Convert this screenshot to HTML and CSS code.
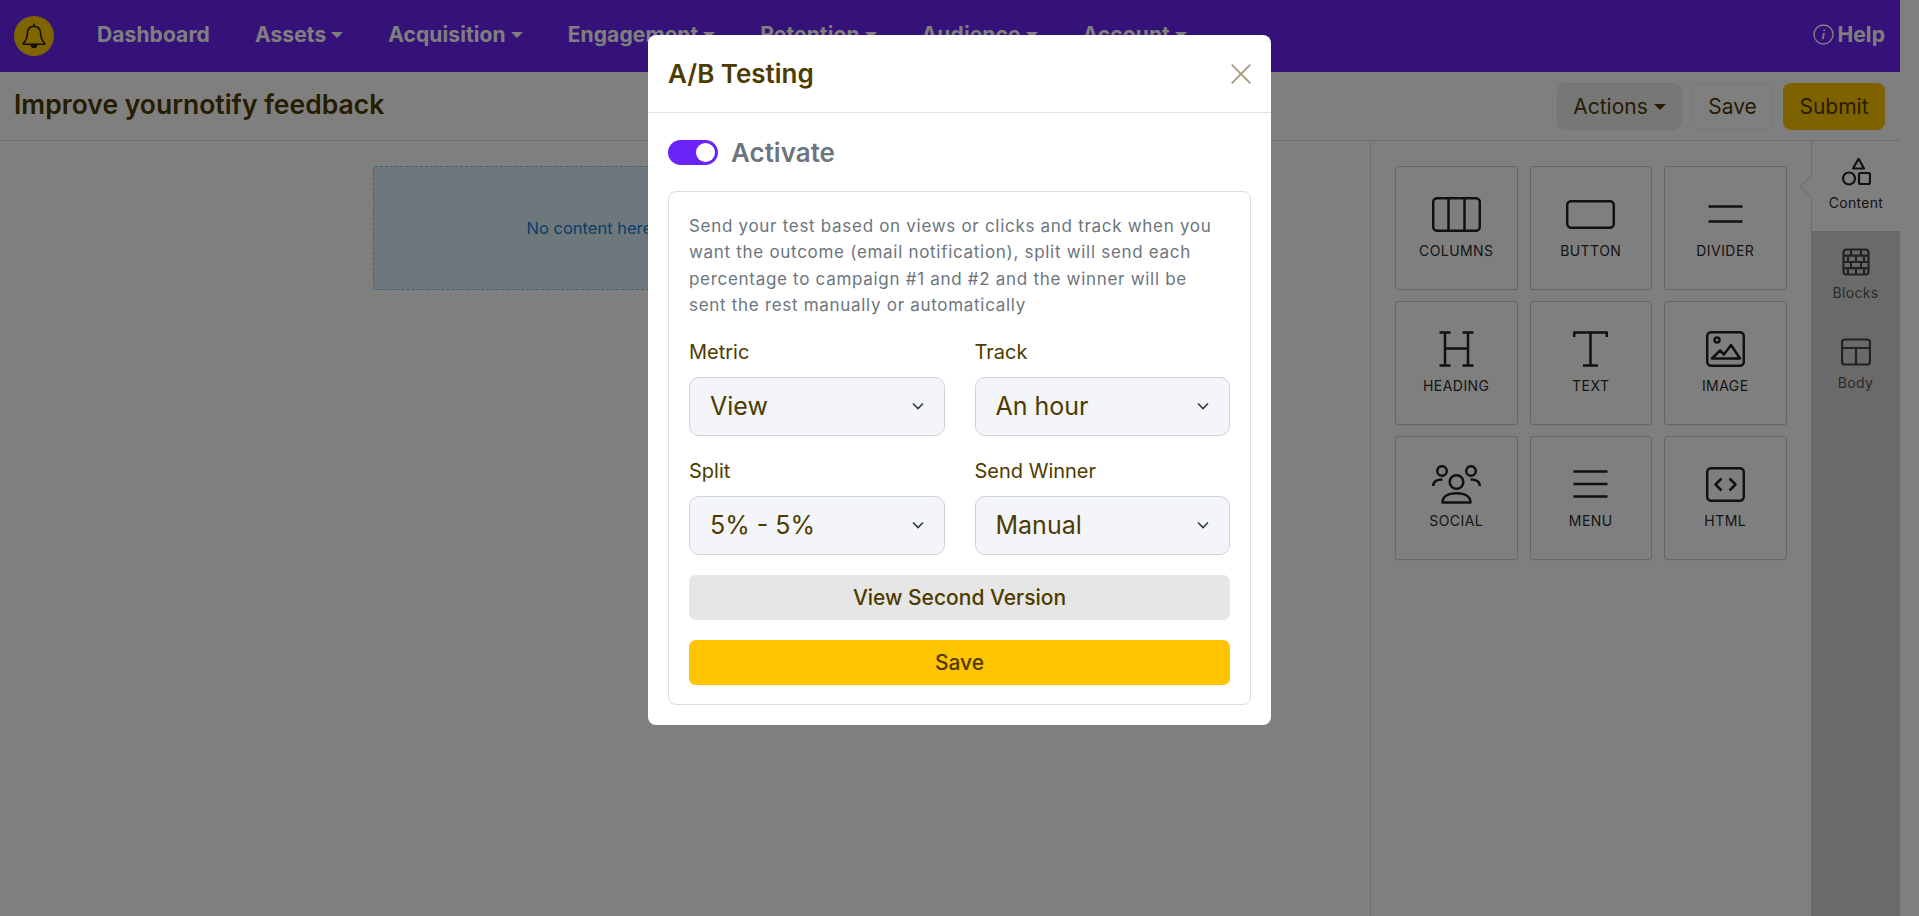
FILE: index.html
```html
<!DOCTYPE html>
<html lang="en">
<head>
    <meta charset="UTF-8">
    <title>A/B Testing</title>
    <link rel="stylesheet" href="styles.css">
</head>
<body>
    <div class="page">
        <!-- Top nav -->
        <header class="topnav">
            <div class="logo">
                <svg width="26" height="28" viewBox="0 0 26 28" fill="none" stroke="#2a1c00" stroke-width="1.6" stroke-linejoin="round">
                    <path d="M13 1.5v2.7M13 4.2c-4.4 0-6.4 3.4-6.6 7.3-.2 4.5-1.5 7.4-4 9.6-.5.5-.2 1.2.5 1.2h20.200c.7 0 1-.7.5-1.200-2.500-2.200-3.800-5.100-4-9.600-.2-3.900-2.200-7.300-6.600-7.300z"/>
                    <path d="M10 22.500c.3 2 1.500 3 3 3s2.700-1 3-3z" fill="#2a1c00"/>
                </svg>
            </div>
            <nav class="topnav-links">
                <a href="#">Dashboard</a>
                <a href="#" class="caret">Assets</a>
                <a href="#" class="caret">Acquisition</a>
                <a href="#" class="caret">Engagement</a>
                <a href="#" class="caret">Retention</a>
                <a href="#" class="caret">Audience</a>
                <a href="#" class="caret">Account</a>
            </nav>
            <a href="#" class="help">
                <svg width="21" height="21" viewBox="0 0 21 21" fill="none" stroke="#fff" stroke-width="1.400">
                    <circle cx="10.500" cy="10.500" r="9.500"/>
                    <path d="M11 9l-1.200 6.200M11.300 5.500v1.400" stroke-width="1.800"/>
                </svg>
                Help
            </a>
        </header>

        <!-- Title bar -->
        <div class="subbar">
            <h1>Improve yournotify feedback</h1>
            <div class="subbar-actions">
                <button class="btn btn-grey caret-dark">Actions</button>
                <button class="btn btn-plain">Save</button>
                <button class="btn btn-gold">Submit</button>
            </div>
        </div>

        <!-- Editor -->
        <div class="editor">
            <main class="canvas">
                <div class="placeholder">No content here</div>
            </main>
            <section class="tools">
                <div class="tool">
                    <svg width="49" height="35" viewBox="0 0 49 35" class="ico"><rect x="1.200" y="1.200" width="46.600" height="32.600" rx="4"/><path d="M16.500 1v33M32.500 1v33"/></svg>
                    <span>COLUMNS</span>
                </div>
                <div class="tool">
                    <svg width="49" height="29" viewBox="0 0 49 29" class="ico"><rect x="1.200" y="1.200" width="46.600" height="26.600" rx="4"/></svg>
                    <span>BUTTON</span>
                </div>
                <div class="tool">
                    <svg width="35" height="18" viewBox="0 0 35 18" class="ico"><path d="M.5 1.500h34M.5 16.500h34"/></svg>
                    <span>DIVIDER</span>
                </div>
                <div class="tool">
                    <svg width="35" height="36" viewBox="0 0 35 36" class="ico"><path d="M.5 1.500h11M6 1.500v33M.5 34.500h11M23.500 1.500h11M29 1.500v33M23.500 34.500h11M6 17.500h23"/></svg>
                    <span>HEADING</span>
                </div>
                <div class="tool">
                    <svg width="35" height="36" viewBox="0 0 35 36" class="ico"><path d="M1.200 6V1.500h32.600V6M17.500 1.500v33M10 34.500h15"/></svg>
                    <span>TEXT</span>
                </div>
                <div class="tool">
                    <svg width="39" height="36" viewBox="0 0 39 36" class="ico"><rect x="1.200" y="1.200" width="36.600" height="33.600" rx="4"/><circle cx="11" cy="9" r="2.500"/><path d="M6 27.500l8-8 4 4 7-9.500 9 13.500z"/></svg>
                    <span>IMAGE</span>
                </div>
                <div class="tool">
                    <svg width="49" height="39" viewBox="0 0 49 39" class="ico"><circle cx="10" cy="6" r="4.800"/><circle cx="39" cy="6" r="4.800"/><circle cx="24.500" cy="17" r="6.800"/><path d="M1.200 21c0-4 3-6.500 9.300-6.500M47.800 21c0-4-3-6.500-9.300-6.500M10.500 37.500c0-5.500 5-9.300 14-9.300s14 3.800 14 9.300z"/></svg>
                    <span>SOCIAL</span>
                </div>
                <div class="tool">
                    <svg width="35" height="28" viewBox="0 0 35 28" class="ico"><path d="M.5 1.500h34M.5 14h34M.5 26.500h34"/></svg>
                    <span>MENU</span>
                </div>
                <div class="tool">
                    <svg width="39" height="35" viewBox="0 0 39 35" class="ico"><rect x="1.200" y="1.200" width="36.600" height="32.600" rx="4"/><path d="M15.500 11.500l-6 6 6 6M23.500 11.500l6 6-6 6"/></svg>
                    <span>HTML</span>
                </div>
            </section>
            <aside class="tabs">
                <div class="tab active">
                    <svg width="30" height="30" viewBox="0 0 30 30" class="ico ico-thin"><path d="M17.500 1.800l5.500 9.700H12z"/><circle cx="8" cy="21.500" r="6"/><rect x="18" y="16" width="11" height="11" rx="1.500"/></svg>
                    <span>Content</span>
                </div>
                <div class="tab">
                    <svg width="30" height="30" viewBox="0 0 30 30" class="ico ico-thin"><rect x="2.500" y="2.500" width="25" height="25" rx="3"/><path d="M2.500 8.700h25M2.500 15h25M2.500 21.200h25M10 2.500v6.200M20 2.500v6.200M7 8.700V15M15 8.700V15M23 8.700V15M10 15v6.200M20 15v6.200M7 21.200v6.300M15 21.200v6.300M23 21.200v6.300"/></svg>
                    <span>Blocks</span>
                </div>
                <div class="tab">
                    <svg width="30" height="30" viewBox="0 0 30 30" class="ico ico-thin"><rect x="1" y="2.500" width="28" height="25" rx="3"/><path d="M1 11h28M15 11v16.500"/></svg>
                    <span>Body</span>
                </div>
            </aside>
        </div>
    </div>

    <!-- Modal -->
    <div class="backdrop"></div>
    <div class="modal-wrap">
        <div class="modal">
            <div class="modal-head">
                <h2>A/B Testing</h2>
                <svg class="close" width="20" height="20" viewBox="0 0 20 20" fill="none" stroke="#a59d82" stroke-width="1.900"><path d="M.7.7l18.600 18.600M19.300.7L.7 19.300"/></svg>
            </div>
            <div class="modal-body">
                <div class="switch-row">
                    <span class="switch"></span>
                    <span class="switch-label">Activate</span>
                </div>
                <div class="panel">
                    <p>Send your test based on views or clicks and track when you<br>want the outcome (email notification), split will send each<br>percentage to campaign #1 and #2 and the winner will be<br>sent the rest manually or automatically</p>
                    <div class="fields">
                        <div>
                            <label>Metric</label>
                            <select><option>View</option></select>
                        </div>
                        <div>
                            <label>Track</label>
                            <select><option>An hour</option></select>
                        </div>
                        <div>
                            <label>Split</label>
                            <select><option>5% - 5%</option></select>
                        </div>
                        <div>
                            <label>Send Winner</label>
                            <select><option>Manual</option></select>
                        </div>
                    </div>
                    <button class="wide wide-grey">View Second Version</button>
                    <button class="wide wide-gold">Save</button>
                </div>
            </div>
        </div>
    </div>
</body>
</html>
```

FILE: styles.css
```css
* {
    margin: 0;
    padding: 0;
    box-sizing: border-box;
}

html, body {
    height: 916px;
    overflow: hidden;
}

body {
    font-family: Inter, "Liberation Sans", sans-serif;
    background: #fff;
    color: #4d3b00;
}

.page {
    width: 1900px;
    height: 916px;
    display: flex;
    flex-direction: column;
}

/* Top nav */
.topnav {
    height: 72px;
    flex: none;
    background: #6a22f5;
    display: flex;
    align-items: center;
    padding: 0 15px 0 14px;
}

.logo {
    width: 40px;
    height: 40px;
    border-radius: 50%;
    background: #ffca00;
    display: flex;
    align-items: center;
    justify-content: center;
}

.topnav-links {
    display: flex;
    gap: 45px;
    margin-left: 43px;
    margin-bottom: 3px;
}

.topnav a {
    color: #fff;
    text-decoration: none;
    font-size: 21px;
    font-weight: 700;
    letter-spacing: 0.1px;
}

.caret::after {
    content: "";
    display: inline-block;
    margin-left: 5px;
    vertical-align: 4px;
    border-top: 6px solid #fff;
    border-left: 6px solid transparent;
    border-right: 6px solid transparent;
}

.topnav .help {
    margin-left: auto;
    margin-bottom: 3px;
    display: flex;
    align-items: center;
    gap: 3px;
}

/* Title bar */
.subbar {
    height: 69px;
    flex: none;
    display: flex;
    align-items: center;
    justify-content: space-between;
    padding: 0 15px 0 14px;
    border-bottom: 1px solid #ddd;
}

.subbar h1 {
    font-size: 26.500px;
    font-weight: 600;
    margin-bottom: 4px;
}

.subbar-actions {
    display: flex;
    gap: 10px;
    margin-top: 1px;
}

.btn {
    height: 47px;
    border-radius: 8px;
    border: 1px solid transparent;
    font-family: inherit;
    font-size: 21px;
    color: #4d3b00;
}

.btn-grey {
    width: 125px;
    background: #efefef;
    border-color: #e6e6e6;
}

.btn-plain {
    width: 81px;
    background: #fff;
    border-color: #eee;
}

.btn-gold {
    width: 102px;
    background: #ffc400;
}

.caret-dark::after {
    content: "";
    display: inline-block;
    margin-left: 6px;
    vertical-align: 4px;
    border-top: 6px solid #4d3b00;
    border-left: 6px solid transparent;
    border-right: 6px solid transparent;
}

/* Editor */
.editor {
    flex: 1;
    display: flex;
}

.canvas {
    flex: 1;
    padding-top: 25px;
}

.placeholder {
    width: 625px;
    height: 124px;
    margin: 0 auto;
    padding-left: 153px;
    background: #dcf0f8;
    border: 1px dashed #7ec8f0;
    border-radius: 2px;
    color: #0f7fd0;
    font-size: 16.500px;
    display: flex;
    align-items: center;
}

.tools {
    width: 441px;
    flex: none;
    border-left: 1px solid #ddd;
    padding: 25px 24px 0 24px;
    display: grid;
    grid-template-columns: repeat(3, 122.500px);
    grid-auto-rows: 124px;
    column-gap: 12px;
    row-gap: 11px;
    align-content: start;
}

.tool {
    border: 1px solid #ccc;
    border-radius: 3px;
    box-shadow: 0 1px 1px rgba(0, 0, 0, 0.05);
    display: grid;
    grid-template-rows: 40px auto;
    justify-items: center;
    align-items: center;
    padding-top: 27px;
    row-gap: 8px;
    align-content: start;
}

.tool span {
    font-size: 14px;
    line-height: 17px;
    letter-spacing: 0.45px;
    color: #2b2b2b;
}

.ico {
    fill: none;
    stroke: #222;
    stroke-width: 2.500;
    stroke-linejoin: round;
}

.ico-thin {
    stroke-width: 2.200;
}

.tabs {
    width: 89px;
    flex: none;
    background: #d4d4d4;
}

.tab {
    height: 90px;
    padding-top: 16px;
    display: flex;
    flex-direction: column;
    align-items: center;
    gap: 7px;
    font-size: 14px;
    line-height: 17px;
    letter-spacing: 0.3px;
    color: #555;
}

.tab .ico {
    stroke: #444;
}

.tab.active {
    background: #fff;
    color: #2b2b2b;
    position: relative;
    border-left: 1px solid #ddd;
}

.tab.active .ico {
    stroke: #222;
}

.tab.active::before {
    content: "";
    position: absolute;
    left: -9px;
    top: 37px;
    width: 16px;
    height: 16px;
    background: #fff;
    border-left: 1px solid #ddd;
    border-bottom: 1px solid #ddd;
    transform: rotate(45deg);
}

/* Modal */
.backdrop {
    position: fixed;
    inset: 0;
    background: rgba(0, 0, 0, 0.5);
}

.modal-wrap {
    position: fixed;
    inset: 0;
    padding-top: 35px;
    display: flex;
    justify-content: center;
    align-items: flex-start;
}

.modal {
    width: 623px;
    background: #fff;
    border-radius: 8px;
}

.modal-head {
    height: 78px;
    padding: 0 20px;
    display: flex;
    align-items: center;
    justify-content: space-between;
    border-bottom: 1px solid #dee2e6;
}

.modal-head h2 {
    font-size: 26px;
    font-weight: 600;
}

.modal-body {
    padding: 27px 20px 20px;
}

.switch-row {
    display: flex;
    align-items: center;
    gap: 13px;
    height: 25px;
    margin-bottom: 26px;
}

.switch {
    width: 50px;
    height: 25px;
    border-radius: 13px;
    background: #6a24fa;
    position: relative;
}

.switch::after {
    content: "";
    position: absolute;
    right: 3px;
    top: 3px;
    width: 19px;
    height: 19px;
    border-radius: 50%;
    background: #fff;
}

.switch-label {
    font-size: 26px;
    font-weight: 600;
    color: #6c757d;
}

.panel {
    border: 1px solid #dedfd8;
    border-radius: 8px;
    padding: 21px 20px 19px;
}

.panel p {
    font-size: 17px;
    line-height: 26.400px;
    color: #6c757d;
    letter-spacing: 0.7px;
}

.fields {
    display: grid;
    grid-template-columns: 1fr 1fr;
    column-gap: 30px;
    row-gap: 23px;
    margin-top: 21px;
    margin-bottom: 20px;
}

.fields label {
    display: block;
    font-size: 20px;
    line-height: 24px;
    margin-bottom: 13px;
}

.fields select {
    appearance: none;
    display: block;
    width: 100%;
    height: 59px;
    padding-left: 20px;
    border: 1px solid #ced4da;
    border-radius: 10px;
    background-color: #f4f5f9;
    background-image: url("data:image/svg+xml,%3Csvg xmlns='http://www.w3.org/2000/svg' viewBox='0 0 12 8'%3E%3Cpath d='M1 1.500l5 5 5-5' fill='none' stroke='%23343a40' stroke-width='1.600'/%3E%3C/svg%3E");
    background-repeat: no-repeat;
    background-position: right 20px center;
    background-size: 12px 8px;
    font-family: inherit;
    font-size: 25px;
    color: #4d3b00;
}

.wide {
    display: block;
    width: 100%;
    height: 45px;
    border: none;
    border-radius: 7px;
    font-family: inherit;
    font-size: 21px;
    font-weight: 500;
    color: #4d3b00;
}

.wide-grey {
    background: #e6e6e6;
    margin-bottom: 20px;
}

.wide-gold {
    background: #ffc400;
}
```
